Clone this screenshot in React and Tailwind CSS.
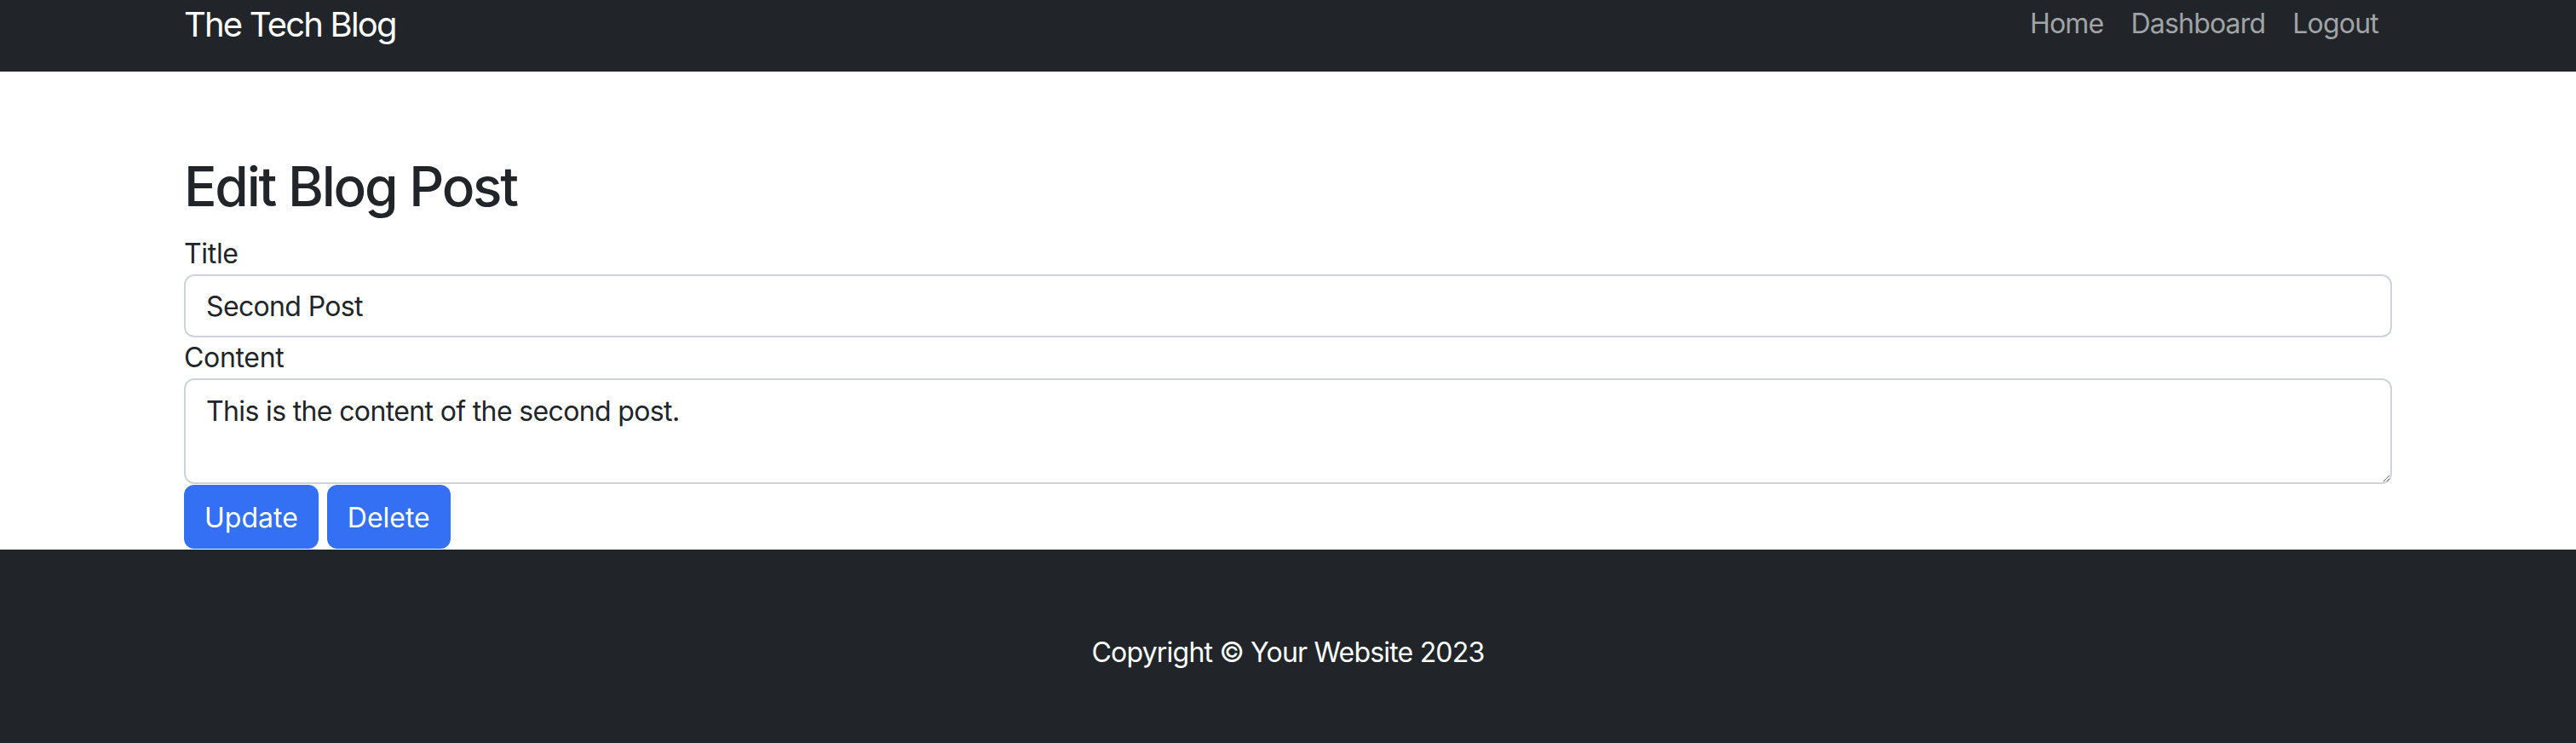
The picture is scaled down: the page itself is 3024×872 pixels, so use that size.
const FONT = { fontFamily: 'Inter, "Noto Sans", "Liberation Sans", sans-serif' }

const NAV_LINKS = ['Home', 'Dashboard', 'Logout']

function Navbar() {
  return (
    <nav className="bg-[#212529] h-[84px]">
      <div className="mx-auto w-[2592px] flex items-start justify-between">
        <a className="text-white text-[40px] leading-[57px] tracking-[-0.045em]">The Tech Blog</a>
        <ul className="flex">
          {NAV_LINKS.map((l) => (
            <li key={l}>
              <a className="block px-[16px] text-[32px] leading-[56px] tracking-[-0.025em] text-[#a1a3a6]">{l}</a>
            </li>
          ))}
        </ul>
      </div>
    </nav>
  )
}

export default function App() {
  return (
    <div style={FONT} className="bg-white text-[#212529] tracking-[-0.02em]">
      <Navbar />

      <main className="mx-auto w-[2592px] mt-[96px]">
        <h2 className="text-[64px] font-medium leading-[77px] mb-[16px] tracking-[-0.035em]">Edit Blog Post</h2>
        <form>
          <label className="block text-[32px] leading-[49px]">Title</label>
          <input
            type="text"
            defaultValue="Second Post"
            style={FONT}
            className="block w-full h-[74px] px-[24px] text-[32px] tracking-[-0.02em] border-2 border-[#ced4da] rounded-[12px] text-[#212529] outline-none"
          />
          <label className="block text-[32px] leading-[48px]">Content</label>
          <textarea
            defaultValue="This is the content of the second post."
            style={FONT}
            className="block w-full h-[124px] px-[24px] py-[13px] text-[32px] leading-[48px] tracking-[-0.02em] border-2 border-[#ced4da] rounded-[12px] text-[#212529] outline-none"
          />
          <div className="flex gap-[10px] mt-[1px]">
            <button type="button" className="h-[75px] px-[24px] pt-[2px] text-[32px] tracking-normal text-white bg-[#3470f3] rounded-[12px]">Update</button>
            <button type="button" className="h-[75px] px-[24px] pt-[2px] text-[32px] tracking-normal text-white bg-[#3470f3] rounded-[12px]">Delete</button>
          </div>
        </form>
      </main>

      <footer className="bg-[#212529] py-[96px] mt-[1px]">
        <p className="text-center text-white text-[32px] leading-[50px] tracking-[-0.025em]">Copyright © Your Website 2023</p>
      </footer>
    </div>
  )
}
